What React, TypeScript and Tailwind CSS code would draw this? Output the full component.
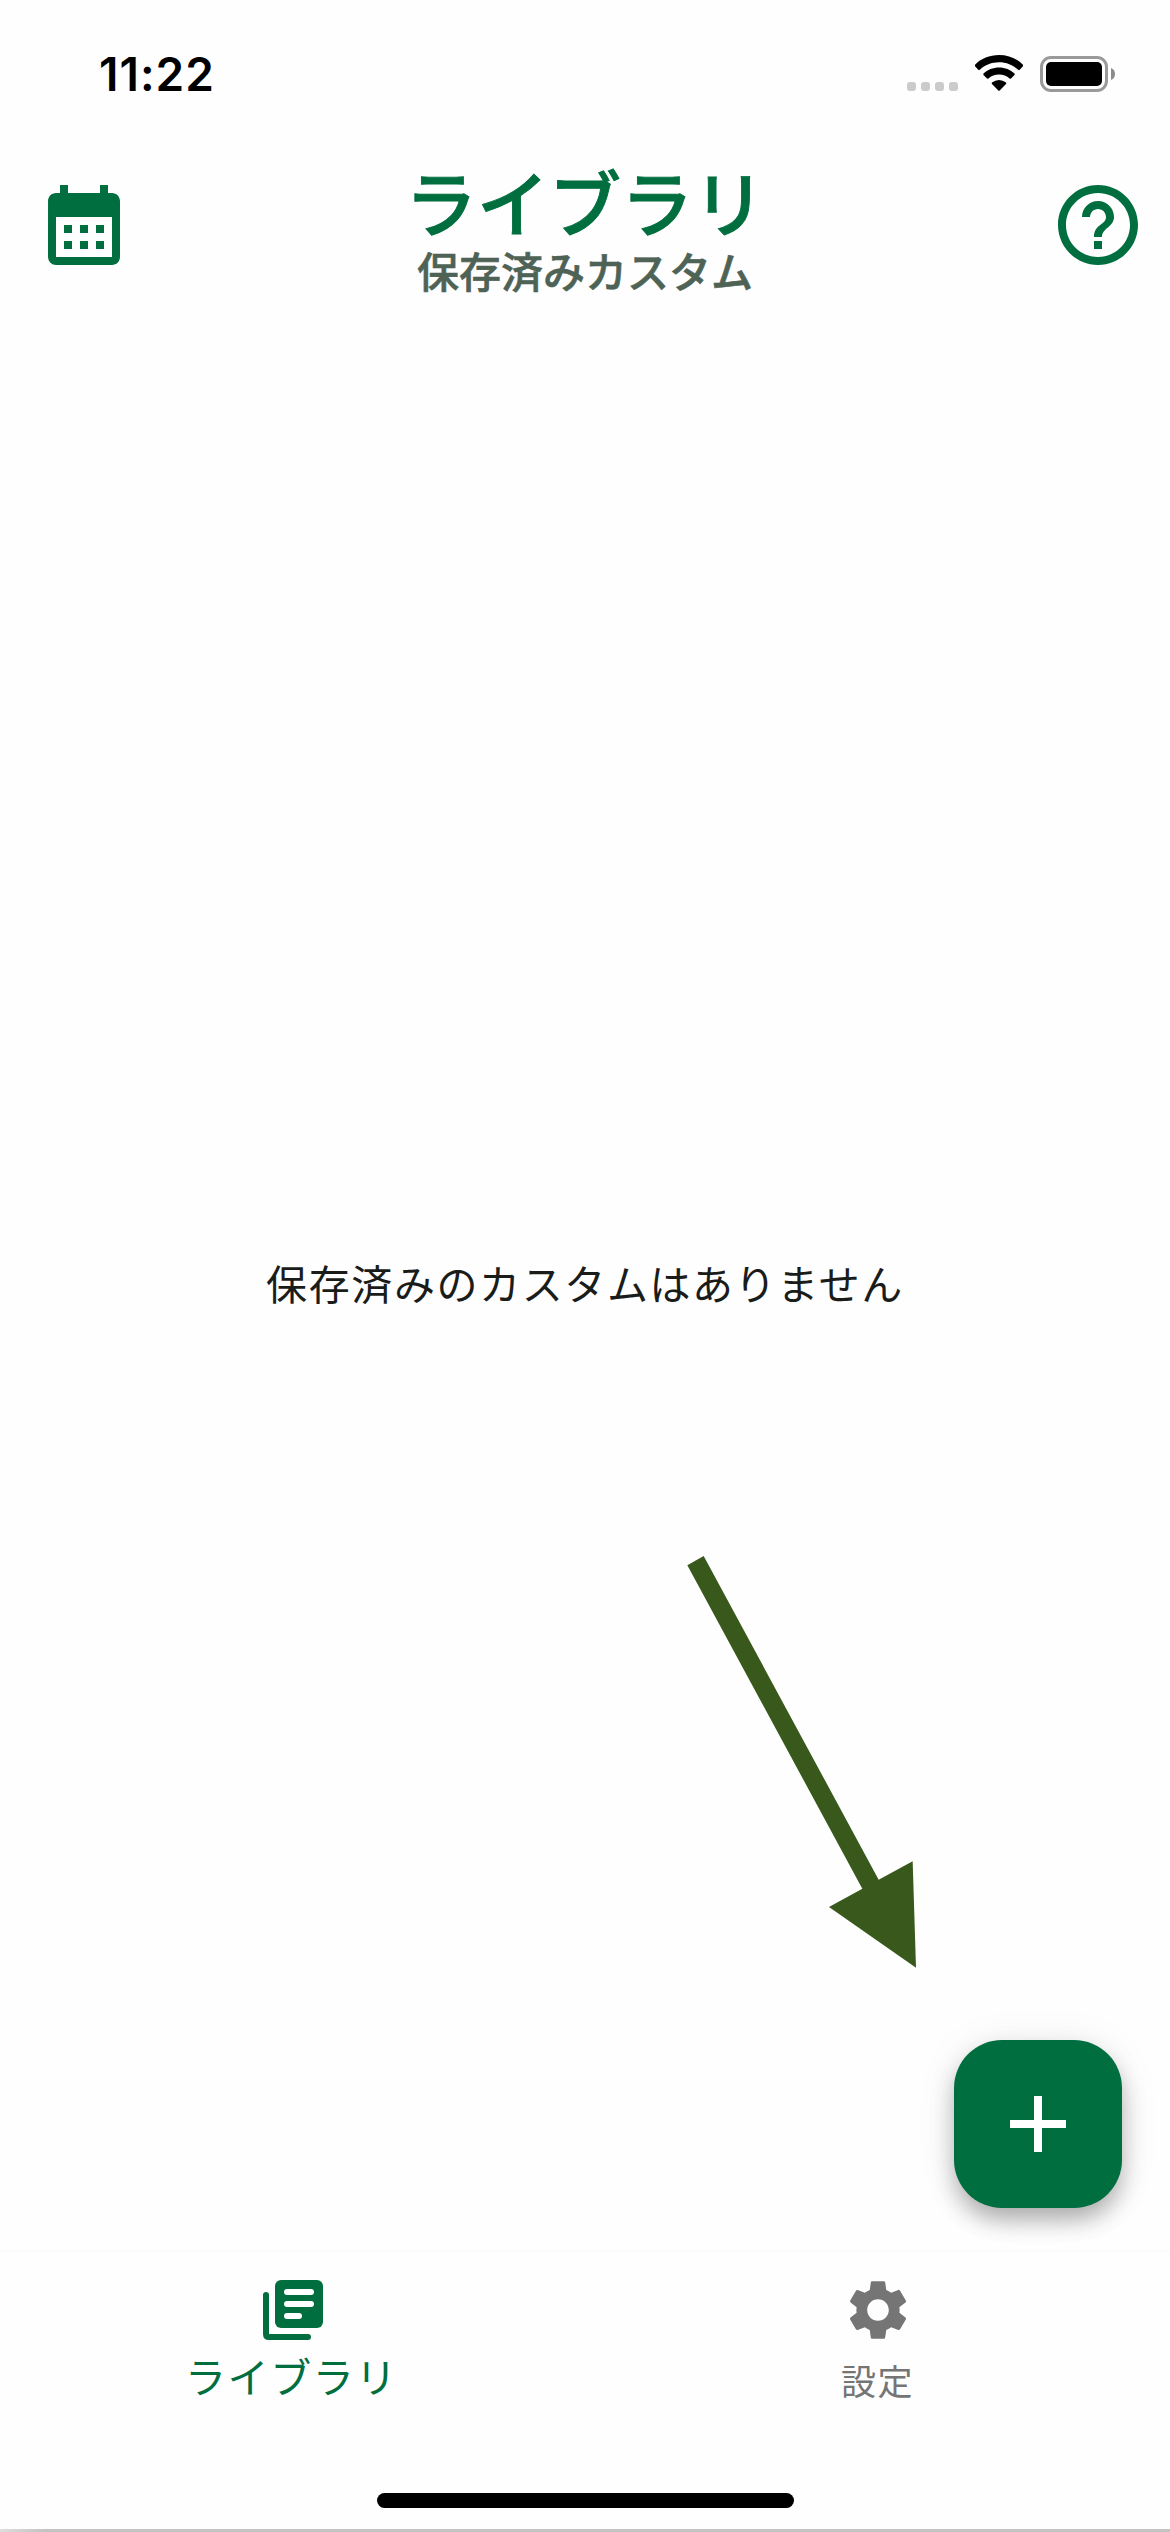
import { MdCalendarMonth, MdHelpOutline, MdSettings, MdAdd } from "react-icons/md";

function StatusBar() {
  return (
    <div className="flex h-[132px] items-start justify-between pl-[99px] pr-[55px]">
      <div className="mt-[47px] font-['Inter',sans-serif] text-[46px] font-semibold leading-[54px] tracking-[1px] text-black">
        11:22
      </div>
      <div className="mt-[55px] flex items-start">
        <div className="mt-[27px] flex gap-[5px]">
          <span className="size-[9px] rounded-[3px] bg-[#cbcbcb]" />
          <span className="size-[9px] rounded-[3px] bg-[#cbcbcb]" />
          <span className="size-[9px] rounded-[3px] bg-[#cbcbcb]" />
          <span className="size-[9px] rounded-[3px] bg-[#cbcbcb]" />
        </div>
        <svg className="ml-[17px] h-[36px] w-[48px]" viewBox="0 0 48 36" fill="black">
          <path d="M24 0C33.4 0 42 3.6 48 9.7Q48.6 10.5 48 11.2L44.7 14.8Q44 15.5 43.2 14.8C38 10 31.300 7.300 24 7.300S10 10 4.800 14.800Q4 15.500 3.300 14.800L0 11.200Q-.6 10.500 0 9.700C6 3.600 14.600 0 24 0Z" />
          <path d="M24 12.500C30 12.500 35.500 14.800 39.500 18.600Q40 19.300 39.500 20L36 23.500Q35.300 24.100 34.600 23.500C31.800 21 28.100 19.600 24 19.600S16.200 21 13.400 23.500Q12.700 24.100 12 23.500L8.500 20Q8 19.300 8.500 18.600C12.500 14.800 18 12.500 24 12.500Z" />
          <path d="M24 25Q28 25 31 27.500Q31.600 28.200 31 28.900L24.700 35.500Q24 36.200 23.300 35.500L17 28.900Q16.400 28.200 17 27.500Q20 25 24 25Z" />
        </svg>
        <svg className="ml-[17px] h-[37px] w-[75px]" viewBox="0 0 75 37">
          <rect x="1.500" y="2.500" width="65" height="33" rx="9.500" fill="none" stroke="#999999" strokeWidth="3" />
          <rect x="6" y="7" width="56" height="24" rx="5" fill="black" />
          <path d="M71 13Q75 14.500 75 19T71 25Z" fill="#8c8c8c" />
        </svg>
      </div>
    </div>
  );
}

function LibraryIcon() {
  return (
    <svg className="size-[72px]" viewBox="0 0 24 24">
      <path d="M3 7V20Q3 21 4 21H17" fill="none" stroke="currentColor" strokeWidth="2" strokeLinecap="round" />
      <rect x="6" y="2" width="16" height="16" rx="2" fill="currentColor" />
      <path d="M10 6H18M10 10H18M10 14H14" stroke="white" strokeWidth="2" strokeLinecap="round" />
    </svg>
  );
}

export default function App() {
  return (
    <div className="flex h-[2532px] w-[1170px] flex-col overflow-hidden bg-[#fefefe] font-['Noto_Sans_CJK_JP',sans-serif]">
      <StatusBar />
      <header className="grid h-[186px] grid-cols-[1fr_auto_1fr] items-start pl-[36px] pr-[24px] text-[#006e3f]">
        <MdCalendarMonth className="mt-[45px] size-[96px]" />
        <div className="-ml-[12px] flex flex-col items-center pt-[27px]">
          <h1 className="h-[85px] text-[72px] font-medium leading-[82px] [-webkit-text-stroke:0.9px]">ライブラリ</h1>
          <p className="text-[42px] font-medium leading-[52px] text-[#4e6355] [-webkit-text-stroke:0.6px]">
            保存済みカスタム
          </p>
        </div>
        <MdHelpOutline className="mt-[45px] size-[96px] justify-self-end" />
      </header>

      <main className="relative flex h-[1932px] flex-col items-center">
        <p className="mt-[933px] text-[41px] leading-[62px] tracking-[1.6px] text-[#1a1c1a]">
          保存済みのカスタムはありません
        </p>
        <svg className="absolute left-[670px] top-[1222px] h-[440px] w-[270px]" viewBox="0 0 810 1320">
          <path d="M52 76L101 48L626 1019L728 964L738 1283L477 1101L577 1046Z" fill="#38591b" />
        </svg>
        <button className="absolute bottom-[42px] right-[48px] flex size-[168px] items-center justify-center rounded-[48px] bg-[#006e3f] text-white shadow-[0_14px_22px_-3px_rgba(0,0,0,0.22),0_10px_28px_rgba(0,0,0,0.12),0_3px_46px_rgba(0,0,0,0.06)]">
          <MdAdd className="size-[96px]" />
        </button>
      </main>

      <nav className="grid h-[243px] grid-cols-2 border-t-2 border-[#fbfbfb] bg-[#fefefe]">
        <div className="flex flex-col items-center pt-[22px] text-[#006e3f]">
          <LibraryIcon />
          <span className="-mt-[2px] mr-[2px] text-[41px] leading-[62px] tracking-[1.6px]">ライブラリ</span>
        </div>
        <div className="flex flex-col items-center pt-[22px] text-[#757575]">
          <MdSettings className="size-[72px]" />
          <span className="mt-[7px] text-[35px] leading-[54px] tracking-[1.6px]">設定</span>
        </div>
      </nav>
      <div className="flex h-[36px] justify-center">
        <div className="ml-px h-[15px] w-[417px] rounded-full bg-black" />
      </div>
      <div className="h-[3px] bg-linear-to-r from-[#dedede] to-[#c3c3c3] to-[4%]" />
    </div>
  );
}
